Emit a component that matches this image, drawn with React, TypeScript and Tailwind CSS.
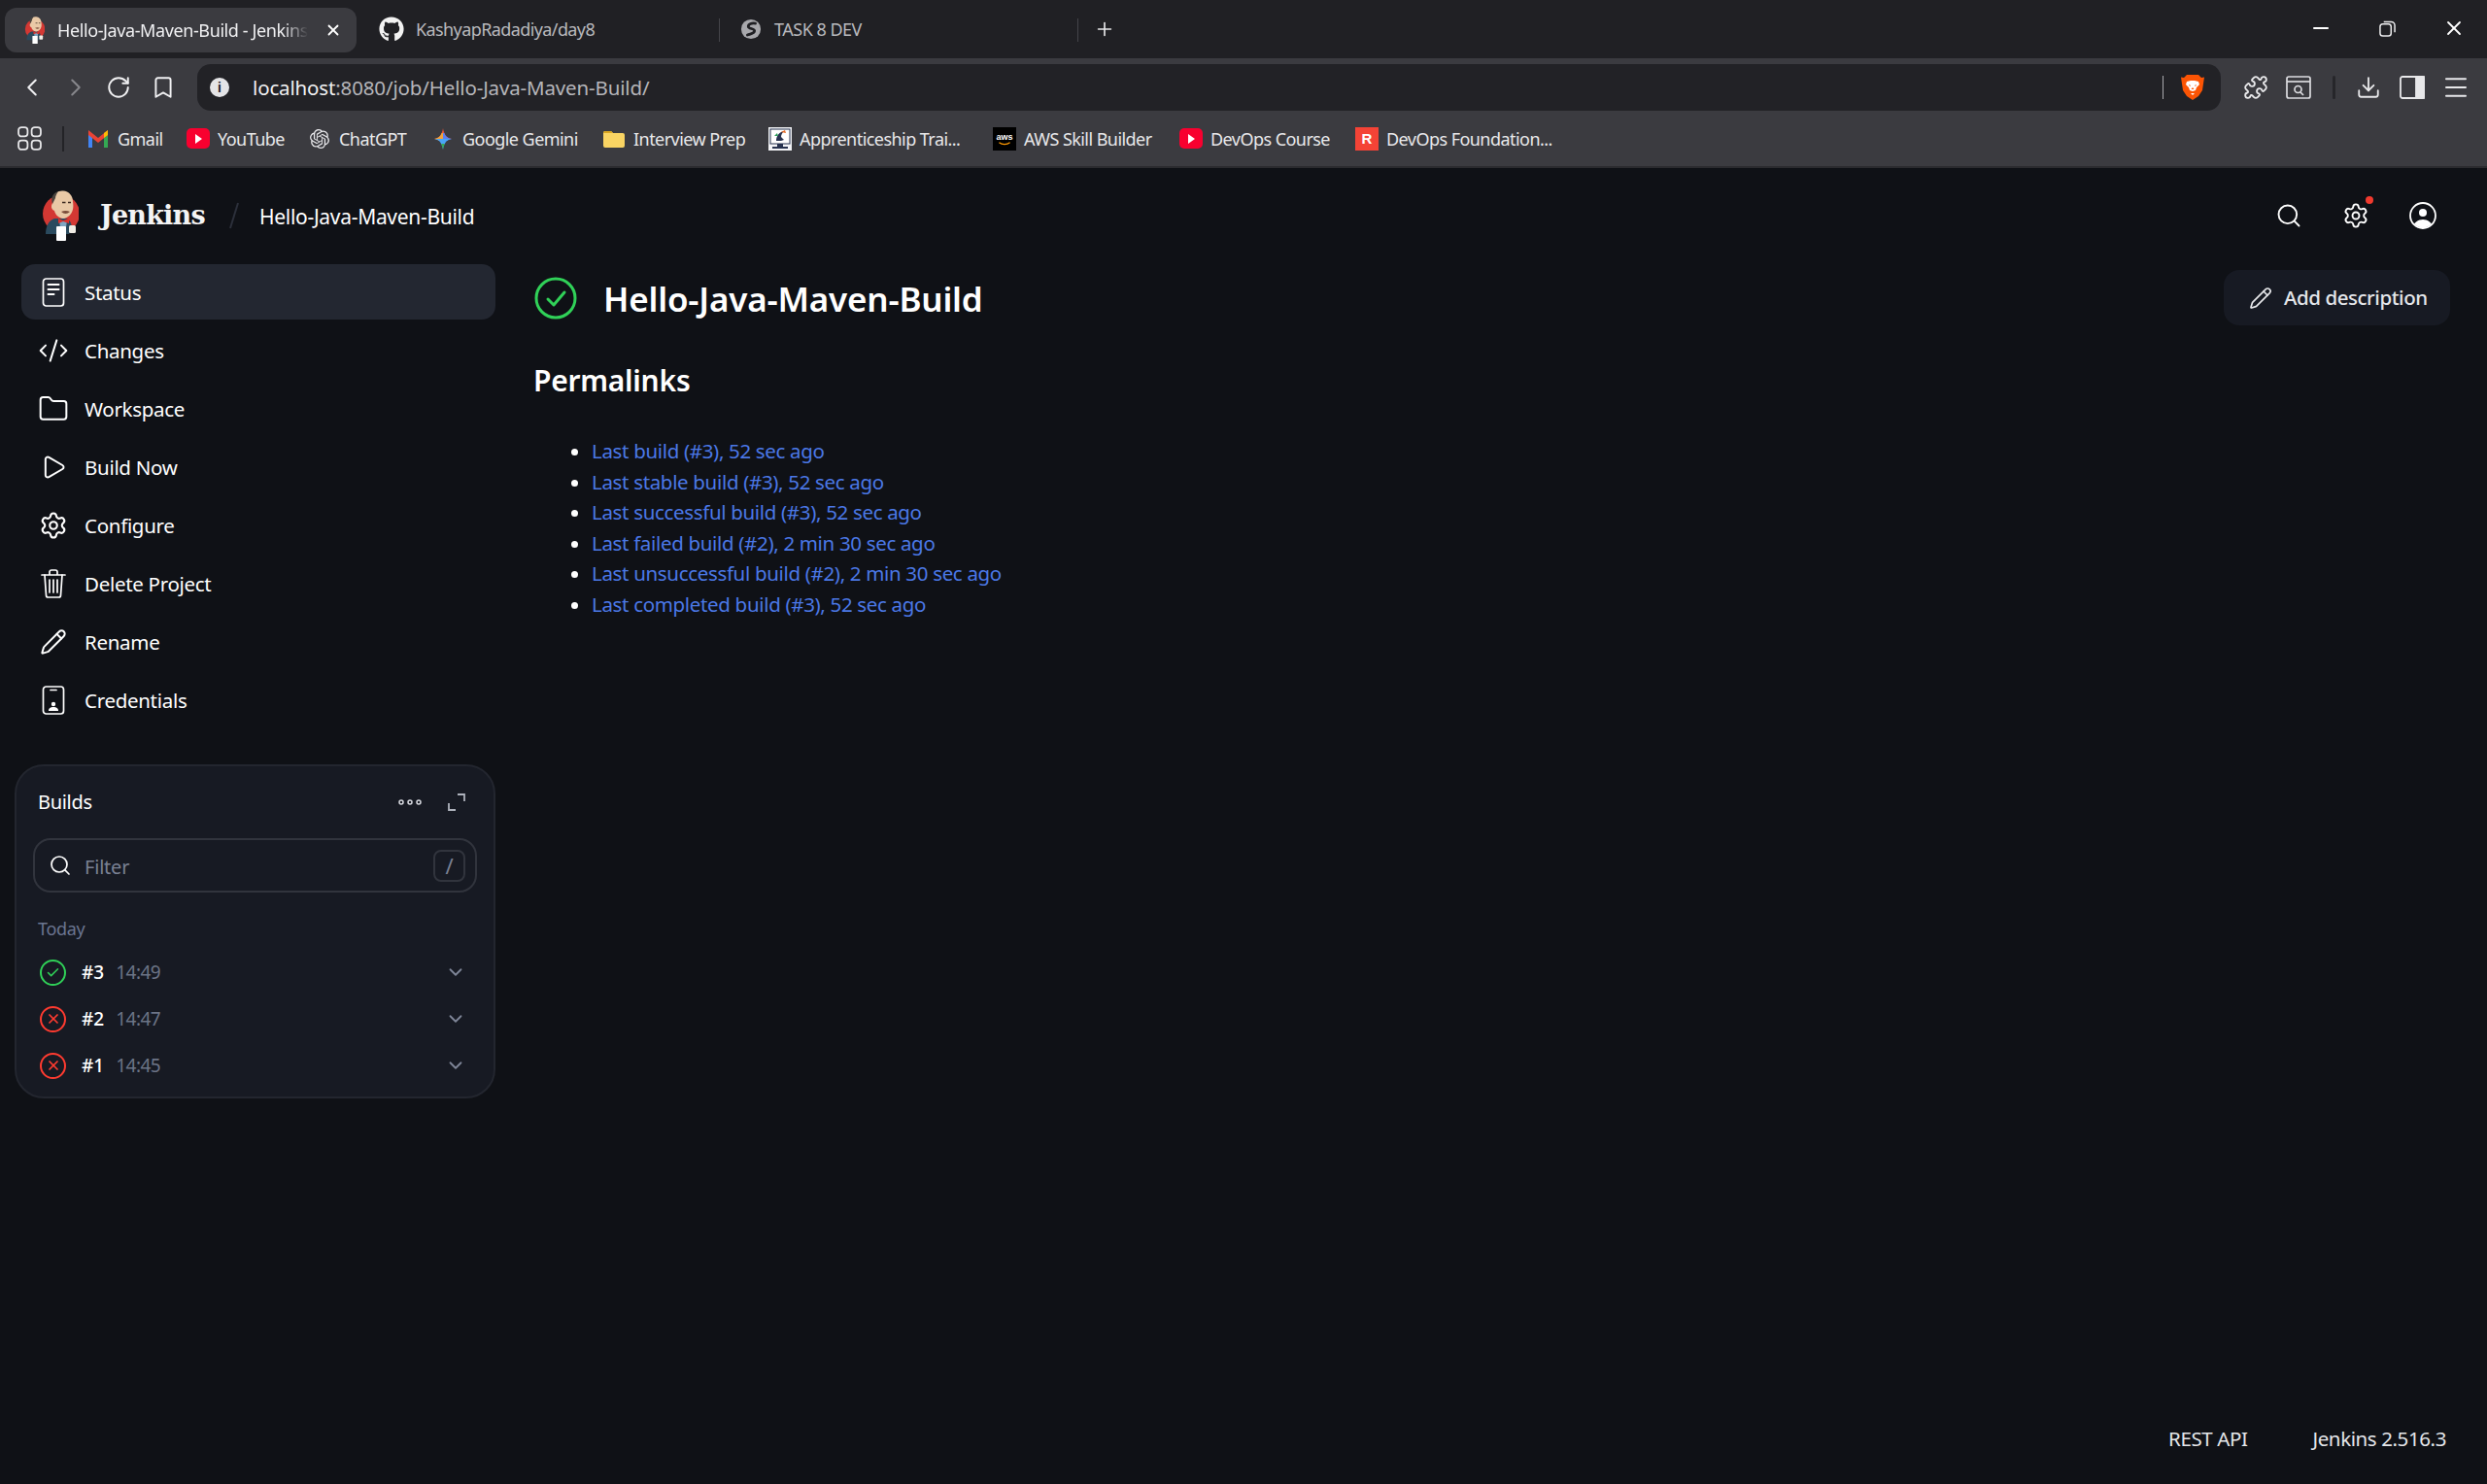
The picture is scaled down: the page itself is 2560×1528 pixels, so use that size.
import React from "react";
import { FaGithub } from "react-icons/fa";
import { SiOpenai } from "react-icons/si";
import { Search, Settings, Pencil, CodeXml, Folder, Play, Plus, Minus, X, ChevronLeft, ChevronRight, RotateCw, Bookmark, Puzzle, Download, Menu, ChevronDown, Check } from "lucide-react";

const sans = `font-['Noto_Sans',sans-serif]`;

function JenkinsLogo({ className }: { className?: string }) {
  return (
    <svg viewBox="0 0 40 52" className={className}>
      <circle cx="22" cy="24" r="19" fill="#d33833" />
      <path d="M6 45c0-8 3-14 9-16l12 0c4 1 6 5 6 12l-3 4H9z" fill="#2a4a5e" />
      <path d="M20 31h8l-1 7h-6z" fill="#7fa6c2" />
      <path d="M13 9c1-6 6-9 11-8.500 6 .5 10 5 10 11 .5 3 .5 6 0 8-1 5-5 9-10 9.500-5-.5-8-4-9-8-2-.5-3.500-3-3-5 .2-1.500 1-2.500 1-3z" fill="#e9c9a6" />
      <path d="M13 14c-2-6 0-11 6-13-2 3-3 5-3 7-1 2-2 4-3 6z" fill="#4a443e" />
      <path d="M22 22c3-1.500 6-1.500 9 0-3 2.500-6 2.500-9 0z" fill="#7a4d3a" />
      <path d="M23 12.500h3.500M29 12.500h3" stroke="#3d2c22" strokeWidth="1.400" />
      <path d="M19 29l5 2 6-2v5l-6-2-5 2z" fill="#dc2f2a" />
      <rect x="17" y="37" width="10" height="15" rx="1" fill="#fff" />
      <rect x="30" y="36" width="7" height="8" rx="1.500" fill="#f0ece4" />
    </svg>
  );
}

function Gemini() {
  const star = "M12 1c1 6 3 10 9 11-6 1-8 5-9 11-1-6-3-10-9-11 6-1 8-5 9-11z";
  return (
    <svg viewBox="0 0 24 24" className="w-6 h-6">
      <defs>
        <clipPath id="gemclip">
          <path d={star} />
        </clipPath>
      </defs>
      <g clipPath="url(#gemclip)">
        <rect x="0" y="0" width="24" height="12" fill="#e8563a" />
        <rect x="0" y="6" width="12" height="8" fill="#f2a33a" />
        <rect x="12" y="6" width="12" height="8" fill="#5b7ff0" />
        <rect x="0" y="12" width="24" height="12" fill="#4aa3f5" />
        <rect x="0" y="17" width="24" height="7" fill="#34a853" />
      </g>
    </svg>
  );
}

function Gmail() {
  return (
    <svg viewBox="0 0 24 24" className="w-[24px] h-[24px]">
      <path d="M2 6v15h4V10z" fill="#4285f4" />
      <path d="M22 6v15h-4V10z" fill="#34a853" />
      <path d="M2 3l10 8 10-8v5l-10 8L2 8z" fill="#ea4335" />
      <path d="M18 6l4-3v5l-4 3z" fill="#fbbc04" />
    </svg>
  );
}

function YT() {
  return (
    <div className="w-6 h-6 flex items-center justify-center">
      <div className="w-6 h-[21px] rounded-[5px] bg-[#f8002f] flex items-center justify-center">
        <div className="w-0 h-0 border-y-[5px] border-y-transparent border-l-[7px] border-l-white" />
      </div>
    </div>
  );
}

function FolderIcon() {
  return (
    <svg viewBox="0 0 24 24" className="w-6 h-6">
      <path d="M1 6a2 2 0 0 1 2-2h6l2 2h10a2 2 0 0 1 2 2v11a2 2 0 0 1-2 2H3a2 2 0 0 1-2-2z" fill="#f9d463" />
      <path d="M1 6a2 2 0 0 1 2-2h6l2 2H1z" fill="#d9a520" />
    </svg>
  );
}

function Apprentice() {
  return (
    <svg viewBox="0 0 24 24" className="w-6 h-6">
      <rect width="24" height="24" fill="#f2f3f6" />
      <rect x="2" y="2" width="20" height="15" fill="#fff" stroke="#27324f" strokeWidth="1" />
      <path d="M8 14c0-5 3-9 8-10-2 2-3 4-3 6l3 3-3 1z" fill="#27324f" />
      <path d="M13 5l4-2 1 3z" fill="#e56a25" />
      <path d="M6 9l3-3 1 3z" fill="#2f9e5b" />
      <rect x="9" y="17" width="6" height="3" fill="#27324f" />
      <rect x="4" y="20" width="16" height="2" fill="#27324f" />
    </svg>
  );
}

function Aws() {
  return (
    <div className="w-6 h-6 bg-black flex flex-col items-center justify-center">
      <span className="font-['Liberation_Sans',sans-serif] text-[9px] leading-[10px] font-bold text-white">aws</span>
      <svg viewBox="0 0 16 5" className="w-[14px] h-[4px]">
        <path d="M1 1c4 3 10 3 14 0" stroke="#f90" strokeWidth="1.400" fill="none" />
      </svg>
    </div>
  );
}

function RIcon() {
  return (
    <div className="w-6 h-6 bg-[#f44336] flex items-center justify-center relative">
      <span className="font-['Liberation_Sans',sans-serif] text-[15px] leading-none font-bold text-white">R</span>
    </div>
  );
}

function Brave() {
  return (
    <svg viewBox="0 0 24 28" className="w-6 h-7">
      <path d="M6 1h12l3 3 3-.5L22 17l-4 6-6 4-6-4-4-6L0 3.500 3 4z" fill="#fb5404" />
      <path d="M6 8l4-1h4l4 1 1 3-3 3-1 3-3 1-3-1-1-3-3-3zM10 20h4l-2 2z" fill="#fff" />
      <path d="M8 11l2 1-1 1zM16 11l-2 1 1 1zM12 14l-1.500 2h3z" fill="#fb5404" />
    </svg>
  );
}

function Bm({ w, icon, label }: { w: string; icon: React.ReactNode; label: string }) {
  return (
    <div className={`${w} flex items-center gap-2 shrink-0`}>
      <div className="w-6 h-6 flex items-center justify-center shrink-0 text-[#e7e7ea]">{icon}</div>
      <span className="text-[18px] leading-6 text-[#e8e8ea] whitespace-nowrap tracking-[-0.55px]">{label}</span>
    </div>
  );
}

function StatusIcon() {
  return (
    <svg viewBox="0 0 28 30" className="w-[28px] h-[30px]" fill="none" stroke="#fff" strokeWidth="1.700" strokeLinecap="round">
      <rect x="3.500" y="1" width="21" height="28" rx="3" />
      <path d="M8.500 7h11M8.500 12h11M8.500 17h6" strokeWidth="2" />
    </svg>
  );
}

function CredIcon() {
  return (
    <svg viewBox="0 0 28 30" className="w-[28px] h-[30px]" fill="none" stroke="#fff" strokeWidth="1.700" strokeLinecap="round">
      <rect x="3.500" y="1" width="21" height="28" rx="3" />
      <path d="M11 4.500h6" />
      <circle cx="14" cy="19" r="2.200" fill="#fff" stroke="none" />
      <path d="M9 26c0-3 2-4 5-4s5 1 5 4z" fill="#fff" stroke="none" />
    </svg>
  );
}

function TrashIcon() {
  return (
    <svg viewBox="0 0 28 30" className="w-[28px] h-[30px]" fill="none" stroke="#fff" strokeWidth="1.700" strokeLinecap="round">
      <path d="M2 6h24M10 6V3a2 2 0 0 1 2-2h4a2 2 0 0 1 2 2v3" />
      <path d="M5 6l1.500 21a2 2 0 0 0 2 2h11a2 2 0 0 0 2-2L23 6" />
      <path d="M10 11v13M14 11v13M18 11v13" />
    </svg>
  );
}

function UserIcon() {
  return (
    <svg viewBox="0 0 28 28" className="w-[28px] h-[28px]">
      <defs>
        <clipPath id="uc">
          <circle cx="14" cy="14" r="12.500" />
        </clipPath>
      </defs>
      <circle cx="14" cy="14" r="13" fill="none" stroke="#fff" strokeWidth="1.800" />
      <circle cx="14" cy="11" r="4" fill="#fff" />
      <path d="M3 28c1-7 6-10 11-10s10 3 11 10z" fill="#fff" clipPath="url(#uc)" />
    </svg>
  );
}

function Nav({ icon, label, active }: { icon: React.ReactNode; label: string; active?: boolean }) {
  return (
    <div className={`h-[57px] mb-[3px] flex items-center rounded-[14px] pl-[17px] ${active ? "bg-[#232731]" : ""}`}>
      <div className="w-[32px] flex justify-center shrink-0">{icon}</div>
      <span className="ml-[16px] pt-[2px] text-[20.500px] text-white tracking-[-0.3px]">{label}</span>
    </div>
  );
}

function BuildRow({ ok, n, t }: { ok?: boolean; n: string; t: string }) {
  return (
    <div className="h-[48px] flex items-center pl-[24px] pr-[28px]">
      <div className={`w-[27px] h-[27px] rounded-full border-2 flex items-center justify-center ${ok ? "border-[#30d158]" : "border-[#ff3b30]"}`}>
        {ok ? <Check size={15} strokeWidth={2.4} color="#30d158" /> : <X size={16} strokeWidth={2.6} color="#ff3b30" />}
      </div>
      <span className="ml-[16px] text-[19px] font-medium text-white">{n}</span>
      <span className="ml-[12px] text-[19px] text-[#6c7486] tracking-[-0.5px]">{t}</span>
      <ChevronDown size={22} color="#7f8698" strokeWidth={2} className="ml-auto" />
    </div>
  );
}

const links = [
  "Last build (#3), 52 sec ago",
  "Last stable build (#3), 52 sec ago",
  "Last successful build (#3), 52 sec ago",
  "Last failed build (#2), 2 min 30 sec ago",
  "Last unsuccessful build (#2), 2 min 30 sec ago",
  "Last completed build (#3), 52 sec ago",
];

export default function App() {
  return (
    <div className={`${sans} w-[2560px] h-[1528px] flex flex-col bg-[#0f1116] overflow-hidden`}>
      {/* tab strip */}
      <div className="h-[60px] bg-[#202024] flex items-start shrink-0">
        <div className="mt-[8px] ml-[5px] w-[362px] h-[46px] rounded-[12px] bg-[#3b3b40] flex items-center pl-[19px] pr-[15px] shrink-0">
          <JenkinsLogo className="w-[22px] h-[28px] shrink-0" />
          <span className="ml-[13px] w-[258px] overflow-hidden whitespace-nowrap text-[18px] text-[#f0f0f2] tracking-[-0.4px] [mask-image:linear-gradient(90deg,#000_90%,transparent)]">Hello-Java-Maven-Build - Jenkins</span>
          <X size={18} color="#fff" strokeWidth={2.4} className="ml-auto" />
        </div>
        <div className="h-[60px] w-[373px] flex items-center pl-[23px] shrink-0">
          <FaGithub size={26} color="#f2f2f2" />
          <span className="ml-[12px] text-[18px] text-[#b9b9bd] tracking-[-0.6px]">KashyapRadadiya/day8</span>
        </div>
        <div className="h-[60px] w-[369px] flex items-center pl-[22px] shrink-0 relative">
          <div className="w-[1px] h-[24px] bg-[#44444a] absolute left-0 top-[19px]" />
          <svg viewBox="0 0 24 24" className="w-[22px] h-[22px]">
            <circle cx="12" cy="12" r="11" fill="#a8a8ac" />
            <path d="M17 5.500c-4-.5-8 .5-8 3.500s7 2 7 5-4 3-8 4.500" fill="none" stroke="#202024" strokeWidth="3" strokeLinecap="round" />
          </svg>
          <span className="ml-[13px] text-[18px] text-[#b9b9bd] tracking-[-0.5px]">TASK 8 DEV</span>
        </div>
        <div className="h-[60px] flex items-center relative pl-[17px]">
          <div className="w-[1px] h-[24px] bg-[#44444a] absolute left-0 top-[19px]" />
          <Plus size={22} color="#e8e8ea" strokeWidth={1.8} />
        </div>
        <div className="ml-auto h-[58px] flex items-center pr-[22px] gap-[48px]">
          <Minus size={24} color="#fff" strokeWidth={2} />
          <svg viewBox="0 0 18 18" className="w-[17px] h-[17px]" fill="none" stroke="#e9e9eb" strokeWidth="1.600">
            <rect x="1" y="4" width="12" height="13" rx="3" />
            <path d="M5 1.500h8a4 4 0 0 1 4 4V13" />
          </svg>
          <X size={24} color="#fff" strokeWidth={1.8} />
        </div>
      </div>

      {/* toolbar */}
      <div className="h-[54px] bg-[#3b3b40] flex items-end shrink-0 relative">
        <div className="h-[48px] w-[203px] flex items-center shrink-0 pl-[18px]">
          <ChevronLeft size={30} color="#f0f0f2" strokeWidth={1.6} />
          <ChevronRight size={30} color="#87878c" strokeWidth={1.6} className="ml-[15px]" />
          <RotateCw size={26} color="#f0f0f2" strokeWidth={1.8} className="ml-[16px]" />
          <Bookmark size={26} color="#f0f0f2" strokeWidth={1.8} className="ml-[20px]" />
        </div>
        <div className="h-[48px] w-[2083px] rounded-[14px] bg-[#222226] flex items-center pl-[13px] pr-[17px] shrink-0">
          <div className="w-[20px] h-[20px] rounded-full bg-[#e4e4e6] flex items-center justify-center shrink-0">
            <span className="font-['Liberation_Sans',sans-serif] text-[14px] leading-none font-bold text-[#222226]">i</span>
          </div>
          <span className="ml-[24px] text-[20.500px] tracking-[-0.15px] whitespace-nowrap">
            <span className="text-[#f0f0f2]">localhost</span>
            <span className="text-[#b6b6ba]">:8080/job/Hello-Java-Maven-Build/</span>
          </span>
          <div className="ml-auto w-[1px] h-[24px] bg-[#a9a9ad]" />
          <div className="ml-[18px]"><Brave /></div>
        </div>
        <div className="h-[48px] flex items-center flex-1 pl-[23px]">
          <Puzzle size={26} color="#e8e8ea" strokeWidth={1.7} />
          <svg viewBox="0 0 26 24" className="ml-[18px] w-[26px] h-[24px]" fill="none" stroke="#dcdce0" strokeWidth="1.700">
            <rect x="1" y="1" width="24" height="22" rx="2" />
            <path d="M1 6h24" />
            <circle cx="12.500" cy="14" r="3.500" />
            <path d="M15 17l3 3" />
          </svg>
          <div className="ml-[22px] w-[3px] h-[24px] rounded bg-[#26262a]" />
          <Download size={26} color="#e8e8ea" strokeWidth={1.7} className="ml-[21px]" />
          <svg viewBox="0 0 26 24" className="ml-[19px] w-[26px] h-[24px]" fill="none" stroke="#e8e8ea" strokeWidth="1.800">
            <rect x="1" y="1" width="24" height="22" rx="2" />
            <rect x="17" y="1" width="8" height="22" fill="#e8e8ea" />
          </svg>
          <Menu size={30} color="#e8e8ea" strokeWidth={1.6} className="ml-[17px]" />
        </div>
      </div>

      {/* bookmarks */}
      <div className="h-[59px] bg-[#3b3b40] border-b-2 border-[#2b2b2f] flex items-center shrink-0 pl-[18px]">
        <svg viewBox="0 0 24 24" className="w-[25px] h-[25px] shrink-0" fill="none" stroke="#e8e8ea" strokeWidth="1.700">
          <rect x="1" y="1" width="9" height="9" rx="3" />
          <rect x="14" y="1" width="9" height="9" rx="3" />
          <rect x="1" y="14" width="9" height="9" rx="3" />
          <rect x="14" y="14" width="9" height="9" rx="3" />
        </svg>
        <div className="ml-[21px] mr-[23px] w-[2px] h-[26px] bg-[#232327] shrink-0" />
        <Bm w="w-[103px]" icon={<Gmail />} label="Gmail" />
        <Bm w="w-[125px]" icon={<YT />} label="YouTube" />
        <Bm w="w-[127px]" icon={<SiOpenai size={20} />} label="ChatGPT" />
        <Bm w="w-[176px]" icon={<Gemini />} label="Google Gemini" />
        <Bm w="w-[171px]" icon={<FolderIcon />} label="Interview Prep" />
        <Bm w="w-[231px]" icon={<Apprentice />} label="Apprenticeship Trai..." />
        <Bm w="w-[192px]" icon={<Aws />} label="AWS Skill Builder" />
        <Bm w="w-[181px]" icon={<YT />} label="DevOps Course" />
        <Bm w="w-[210px]" icon={<RIcon />} label="DevOps Foundation..." />
      </div>

      {/* Jenkins header */}
      <div className="h-[98px] flex items-center shrink-0 pl-[41px] pr-[52px]">
        <JenkinsLogo className="w-[40px] h-[52px] shrink-0" />
        <span className="ml-[22px] w-[110px] font-['DejaVu_Serif',serif] font-bold text-[27px] tracking-[-0.8px] text-[#f4f4f4] whitespace-nowrap">Jenkins</span>
        <svg viewBox="0 0 12 28" className="ml-[22px] w-[12px] h-[28px]">
          <path d="M10 1L2 27" stroke="#2c303b" strokeWidth="2" />
        </svg>
        <span className="ml-[20px] pt-[3px] text-[21px] text-white tracking-[-0.3px]">Hello-Java-Maven-Build</span>
        <div className="ml-auto flex items-center gap-[41px]">
          <Search size={28} color="#fff" strokeWidth={1.6} />
          <div className="relative">
            <Settings size={28} color="#fff" strokeWidth={1.6} />
            <div className="absolute -top-[6px] -right-[4px] w-[8px] h-[8px] rounded-full bg-[#f03a2e]" />
          </div>
          <UserIcon />
        </div>
      </div>

      {/* body */}
      <div className="flex-1 flex min-h-0">
        <aside className="w-[510px] shrink-0 flex flex-col">
          <nav className="ml-[22px] pt-[1px]">
            <Nav active icon={<StatusIcon />} label="Status" />
            <Nav icon={<CodeXml size={32} color="#fff" strokeWidth={1.5} />} label="Changes" />
            <Nav icon={<Folder size={32} color="#fff" strokeWidth={1.5} />} label="Workspace" />
            <Nav icon={<Play size={28} color="#fff" strokeWidth={1.7} />} label="Build Now" />
            <Nav icon={<Settings size={30} color="#fff" strokeWidth={1.7} />} label="Configure" />
            <Nav icon={<TrashIcon />} label="Delete Project" />
            <Nav icon={<Pencil size={28} color="#fff" strokeWidth={1.7} />} label="Rename" />
            <Nav icon={<CredIcon />} label="Credentials" />
          </nav>
          <section className="ml-[15px] mt-[35px] h-[344px] rounded-[30px] border-2 border-[#23262f] bg-[#171a23]">
            <div className="h-[74px] flex items-center pl-[22px] pr-[29px]">
              <span className="text-[20px] text-white tracking-[-0.3px]">Builds</span>
              <svg viewBox="0 0 24 6" className="ml-auto w-[24px] h-[6px]" fill="none" stroke="#d7d9df" strokeWidth="1.500">
                <circle cx="3" cy="3" r="2" />
                <circle cx="12" cy="3" r="2" />
                <circle cx="21" cy="3" r="2" />
              </svg>
              <svg viewBox="0 0 18 18" className="ml-[27px] w-[18px] h-[18px]" fill="none" stroke="#aeb2bc" strokeWidth="1.800">
                <path d="M10 1h7v7M1 10v7h7" />
              </svg>
            </div>
            <div className="mx-[17px] h-[56px] rounded-[18px] border-2 border-[#31343d] flex items-center pl-[14px] pr-[10px]">
              <Search size={24} color="#fff" strokeWidth={1.7} />
              <span className="ml-[13px] pt-[3px] text-[20px] text-[#7a8194] tracking-[-0.2px]">Filter</span>
              <div className="ml-auto w-[33px] h-[33px] rounded-[8px] border-2 border-[#31343d] flex items-center justify-center text-[22px] text-[#7a8194]">/</div>
            </div>
            <div className="mt-[23px] ml-[22px] h-[28px] flex items-center text-[18px] text-[#6b7590] tracking-[-0.3px]">Today</div>
            <div className="mt-[7px]">
              <BuildRow ok n="#3" t="14:49" />
              <BuildRow n="#2" t="14:47" />
              <BuildRow n="#1" t="14:45" />
            </div>
          </section>
        </aside>

        <main className="flex-1 min-w-0 flex flex-col pl-[39px] pr-[38px]">
          <div className="flex items-start justify-between pt-[7px]">
            <div className="flex items-center h-[57px]">
              <svg viewBox="0 0 44 44" className="ml-[1px] w-[44px] h-[44px]" fill="none" stroke="#30d158" strokeWidth="3">
                <circle cx="22" cy="22" r="20" />
                <path d="M14 23l6 6 11-13" strokeLinecap="round" strokeLinejoin="round" />
              </svg>
              <h1 className="ml-[27px] pt-[4px] text-[35px] font-semibold text-white tracking-[-0.2px]">Hello-Java-Maven-Build</h1>
            </div>
            <div className="w-[233px] h-[57px] rounded-[16px] bg-[#171a23] flex items-center pl-[26px]">
              <Pencil size={24} color="#e6e7ea" strokeWidth={1.7} />
              <span className="ml-[12px] text-[20.500px] font-medium text-[#e4e6ea] tracking-[-0.45px]">Add description</span>
            </div>
          </div>
          <h2 className="mt-[35px] text-[30px] leading-[44px] font-semibold text-white tracking-[-0.25px]">Permalinks</h2>
          <ul className="mt-[35px] ml-[60px] list-disc marker:text-white text-[20.500px] leading-[31.600px] text-[#4b78e6] tracking-[-0.33px]">
            {links.map((l) => (
              <li key={l}>{l}</li>
            ))}
          </ul>
          <footer className="mt-auto h-[62px] flex items-start justify-end pr-[4px] gap-[67px] text-[20.500px] text-[#e4e6ea] tracking-[-0.4px]">
            <span>REST API</span>
            <span>Jenkins 2.516.3</span>
          </footer>
        </main>
      </div>
    </div>
  );
}
